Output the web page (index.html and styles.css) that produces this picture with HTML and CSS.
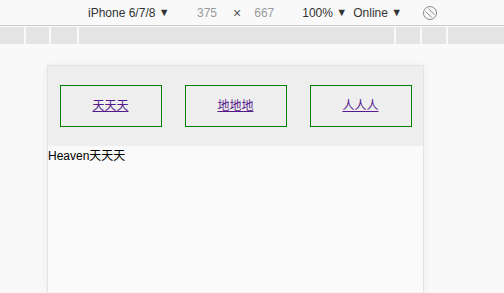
FILE: index.html
```html
<!DOCTYPE html>
<html lang="zh">
<head>
    <meta charset="UTF-8">
    <title>Device toolbar</title>
    <link rel="stylesheet" href="styles.css">
</head>
<body>
    <div class="toolbar">
        <span class="device">iPhone 6/7/8 <i class="arrow">&#9660;</i></span>
        <span class="dim">375</span>
        <span class="times">&times;</span>
        <span class="dim">667</span>
        <span class="zoom">100% <i class="arrow">&#9660;</i></span>
        <span class="net">Online <i class="arrow">&#9660;</i></span>
        <svg class="rotate" width="16" height="16" viewBox="0 0 16 16">
            <circle cx="8" cy="8" r="6.5" fill="none" stroke="#888" stroke-width="1"/>
            <line x1="3.6" y1="6.4" x2="9.6" y2="12.4" stroke="#888" stroke-width="1"/>
            <line x1="6.4" y1="3.6" x2="12.4" y2="9.6" stroke="#888" stroke-width="1"/>
        </svg>
    </div>
    <div class="ruler">
        <div class="seg" style="width:24px"></div>
        <div class="seg" style="width:23px"></div>
        <div class="seg" style="width:26px"></div>
        <div class="seg grow"></div>
        <div class="seg" style="width:24px"></div>
        <div class="seg" style="width:24px"></div>
        <div class="seg" style="width:56px"></div>
    </div>
    <div class="viewport">
        <div class="phone">
            <div class="nav">
                <a class="btn" href="#">天天天</a>
                <a class="btn" href="#">地地地</a>
                <a class="btn" href="#">人人人</a>
            </div>
            <div class="content">Heaven天天天</div>
        </div>
    </div>
</body>
</html>
```

FILE: styles.css
```css
body {
    margin: 0;
    background: #f9f9f9;
    font-family: "Liberation Sans", "Noto Sans CJK SC", sans-serif;
    overflow: hidden;
    height: 293px;
}

.toolbar {
    display: flex;
    align-items: center;
    height: 26px;
    padding-left: 88px;
    border-bottom: 1px solid #cacaca;
    box-sizing: border-box;
    font-size: 12px;
    color: #333;
}

.arrow {
    font-style: normal;
    font-size: 11px;
    position: relative;
    top: -1px;
}

.device {
    width: 109px;
}

.dim {
    color: #999;
}

.times {
    color: #555;
    margin: 0 13px 0 16px;
    font-size: 14px;
}

.zoom {
    margin-left: 28px;
    width: 51px;
}

.rotate {
    margin-left: 20px;
}

.ruler {
    display: flex;
    gap: 2px;
    margin-top: 1px;
    height: 17px;
}

.seg {
    background: #e4e4e4;
}

.seg.grow {
    flex: 1;
}

.viewport {
    padding: 21px 0 0 47px;
}

.phone {
    width: 375px;
    height: 226px;
    border: 1px solid #e3e3e3;
    border-bottom: 0;
    background: #fafafa;
    box-shadow: 0 0 8px rgba(0, 0, 0, 0.06);
}

.nav {
    height: 80px;
    background: #eeeeee;
    display: flex;
    justify-content: space-around;
    align-items: center;
}

.btn {
    display: block;
    width: 100px;
    height: 40px;
    line-height: 40px;
    border: 1px solid green;
    text-align: center;
    font-size: 12px;
    color: #551a8b;
}

.content {
    font-size: 12px;
    line-height: 20px;
    color: #000;
}
```
